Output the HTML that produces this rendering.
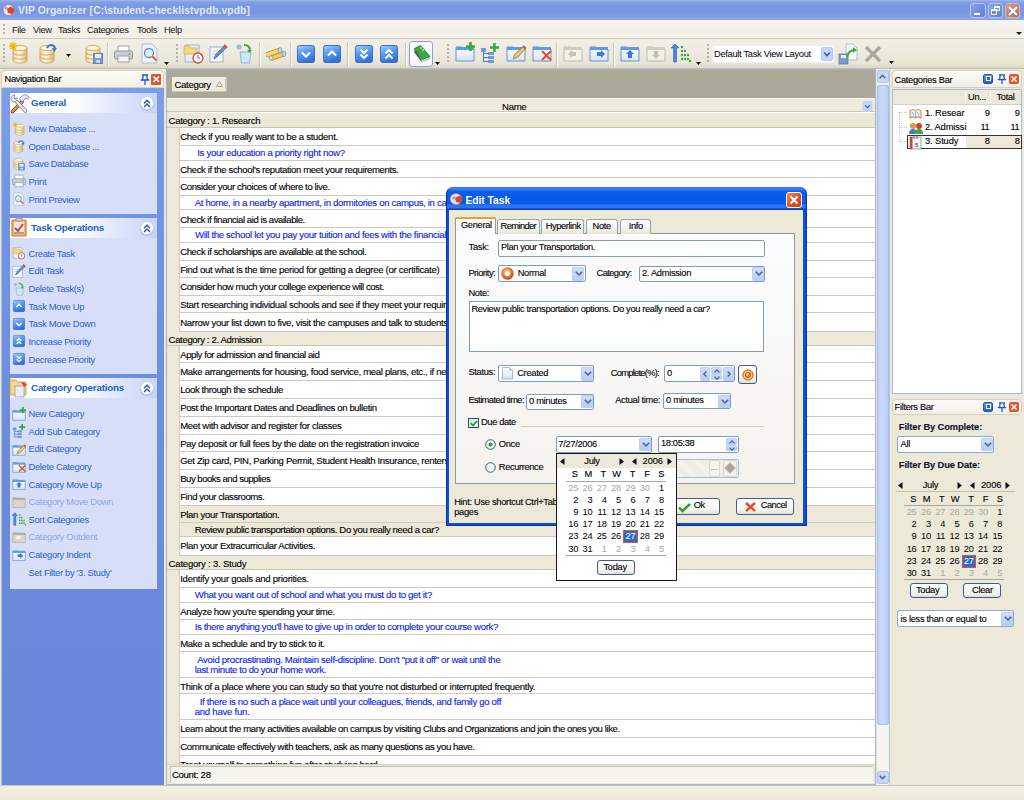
<!DOCTYPE html>
<html><head><meta charset="utf-8">
<style>
*{margin:0;padding:0;box-sizing:border-box}
html,body{width:1024px;height:800px;overflow:hidden;background:#ECE9D8;font-family:"Liberation Sans",sans-serif;font-size:9.6px;color:#000}
.a{position:absolute}
.t{position:absolute;white-space:nowrap;line-height:1}
svg.i{position:absolute;overflow:visible}
#title{left:0;top:0;width:1024px;height:20px;background:linear-gradient(#A6BBEF 0,#8CA7E7 1px,#7C9AE1 4px,#7896DF 13px,#83A0E4 17px,#90ABE8 19px,#7898DE 20px)}
#title .t{left:18px;top:5.8px;font-size:10.3px;font-weight:bold;color:#DDE7FA;letter-spacing:0.1px}
.wbtn{position:absolute;top:2.5px;width:15.5px;height:15.5px;border:1px solid #B4C6F2;border-radius:3px;background:linear-gradient(135deg,#89A4E8,#5C7FD6)}
#menu{left:0;top:20px;width:1024px;height:18px;background:linear-gradient(#F5F3EC,#F1EFE6)}
#menu .t{top:6.2px;font-size:9.3px;color:#111;letter-spacing:-0.35px}
#tb{left:0;top:38px;width:1024px;height:31px;background:linear-gradient(#F2F0E6 0,#EEECE0 40%,#E8E5D6 85%,#DAD7C6 100%);border-top:1px solid #CFCCBC;border-bottom:1px solid #BFBCAC}
.grip{position:absolute;width:2px;background:repeating-linear-gradient(#B5B29E 0 2px,transparent 2px 4px)}
.sep{position:absolute;width:2px;border-left:1px solid #C9C6B5;border-right:1px solid #FFFFFF}
#navhdr{left:1px;top:70px;width:163px;height:18px;background:linear-gradient(#FCFBF7,#F2F0E8);border:1px solid #D3D0C2;border-radius:4px 4px 2px 2px}
#nav{left:1px;top:88px;width:163px;height:697px;background:linear-gradient(#7C9FE7 0,#7295E2 120px,#6A8CDB 400px,#6888DA 100%);border-left:1px solid #A7BAE8}
.grp{position:absolute;left:9px;width:147px;background:#D6DFF7}
.ghd{position:absolute;left:0;top:0;width:147px;height:20px;border-radius:4px 4px 0 0;background:linear-gradient(90deg,#FFFFFF 0,#FFFFFF 40%,#C7D4F7 100%)}
.ghd .t{left:20px;top:5px;font-weight:bold;color:#215DC6;font-size:9.8px;letter-spacing:-0.2px}
.cbtn{position:absolute;left:129.5px;top:2.5px;width:14.5px;height:14.5px;border-radius:50%;background:#fff;border:1px solid #C8D2EC;box-shadow:0 1px 1px #B0BEE0}
.lnk{position:absolute;font-size:9.4px;color:#2A5FC8;letter-spacing:-0.32px;white-space:nowrap;line-height:1}
.dis{color:#8EA5DC}
#gridbox{left:167px;top:70px;width:708px;height:715px;background:#fff;overflow:hidden}
#gridbd{left:166px;top:69px;width:710px;height:716px;border:1px solid #A5B3CC}
.gt{position:absolute;white-space:nowrap;line-height:1;font-size:9.6px;letter-spacing:-0.33px;color:#000;-webkit-text-stroke:0.12px currentColor}
.pv{color:#0A1EF0}
.row{position:absolute;left:12px;width:696px;border-bottom:1px solid #CDC9BC;border-left:1px solid #D0CCBE;background:#fff}
.sel{background:#ECE9D8}
.catrow{position:absolute;left:0;width:708px;background:#ECE9D8;border-bottom:1px solid #C9C5B5}
.phd{position:absolute;left:891.5px;width:130px;border:1px solid #D3D0C2;border-radius:4px 4px 3px 3px;background:linear-gradient(#FCFBF7,#F1EFE6)}
.pic{position:absolute;width:10px;height:10px;border-radius:2px}
.ut{position:absolute;white-space:nowrap;line-height:1;font-size:9.3px;letter-spacing:-0.3px;color:#000;-webkit-text-stroke:0.12px #000}
.cb{position:absolute;background:#fff;border:1px solid #8FA8CF;border-radius:2px}
.cbb{position:absolute;width:12px;background:linear-gradient(#CFDDFD,#B7CBF8);border:1px solid #BCD0FA;border-radius:1px}
.cbb svg{left:2px;top:50%;margin-top:-2.5px}
.calday{position:absolute;white-space:nowrap;line-height:1;font-size:9.3px;color:#000;text-align:right;width:14px;letter-spacing:-0.2px}
.gr{color:#A9A8A0}
.dlg{left:445.5px;top:187px;width:361px;height:339px;border-radius:7px 7px 0 0;background:#0A4FE0}
.tab{position:absolute;height:15px;border:1px solid #91A7B4;border-bottom:none;border-radius:3px 3px 0 0;background:linear-gradient(#FFFFFF,#F3F2EC 60%,#E8E6DC)}
.ed{position:absolute;background:#fff;border:1px solid #7F9DB9}
.btn{position:absolute;border:1px solid #3F5F9A;border-radius:3px;background:linear-gradient(#FFFFFF,#F5F4EF 70%,#E3E0D3)}

</style></head><body>
<svg width="0" height="0" style="position:absolute"><defs>
<linearGradient id="gdb" x1="0" x2="1"><stop offset="0" stop-color="#E9D7A6"/><stop offset=".45" stop-color="#FFF8E4"/><stop offset="1" stop-color="#D9B976"/></linearGradient>
<linearGradient id="gbl" x1="0" y1="0" x2=".4" y2="1"><stop offset="0" stop-color="#A6D0FC"/><stop offset=".45" stop-color="#5CA0F2"/><stop offset="1" stop-color="#3272DA"/></linearGradient>
<linearGradient id="gfo" x1="0" y1="0" x2="0" y2="1"><stop offset="0" stop-color="#FFFFFF"/><stop offset="1" stop-color="#D6E3F6"/></linearGradient>
<symbol id="db" viewBox="0 0 18 20"><path d="M2 4v12c0 1.8 3.1 3 7 3s7-1.2 7-3V4" fill="url(#gdb)" stroke="#C79A4A" stroke-width=".8"/><ellipse cx="9" cy="4" rx="7" ry="2.6" fill="#FFF6DA" stroke="#C79A4A" stroke-width=".8"/><path d="M2 8.5c0 1.6 3.1 2.6 7 2.6s7-1 7-2.6M2 12.5c0 1.6 3.1 2.6 7 2.6s7-1 7-2.6" fill="none" stroke="#D9A658" stroke-width="1"/></symbol>
<symbol id="dbnew" viewBox="0 0 20 22"><use href="#db" x="2" y="2" width="18" height="20"/><path d="M4 0v8M0 4h8M1 1l6 6M7 1L1 7" stroke="#F4B400" stroke-width="1.3"/></symbol>
<symbol id="dbopen" viewBox="0 0 20 22"><use href="#db" x="0" y="2" width="18" height="20"/><path d="M9 6c2-4 7-4 8 0" fill="none" stroke="#3D7BD8" stroke-width="2.2"/><path d="M14 6h5l-2.5 4z" fill="#3D7BD8"/></symbol>
<symbol id="dbsave" viewBox="0 0 20 22"><use href="#db" x="0" y="1" width="18" height="20"/><rect x="9.5" y="10.5" width="9" height="10" fill="#7A9DD6" stroke="#4E6EA8" stroke-width=".8"/><rect x="11" y="11" width="6" height="4" fill="#E8EEF8"/><rect x="12" y="17" width="4" height="3" fill="#C8D4E8"/></symbol>
<symbol id="printer" viewBox="0 0 19 18"><rect x="4" y="1" width="11" height="6" fill="#fff" stroke="#8A8F9A" stroke-width=".8"/><rect x=".5" y="6" width="18" height="8" rx="1.5" fill="#C9CDD6" stroke="#7D838E" stroke-width=".8"/><rect x="4" y="11" width="11" height="6" fill="#F4F4F4" stroke="#8A8F9A" stroke-width=".8"/><circle cx="15.5" cy="8.8" r=".9" fill="#3BB33B"/></symbol>
<symbol id="preview" viewBox="0 0 18 21"><path d="M1 1h10l5 5v14H1z" fill="#EEF3FB" stroke="#9BAFCF" stroke-width=".8"/><circle cx="8" cy="10" r="4.5" fill="#DDEBFA" stroke="#6E8FB8" stroke-width="1.3"/><path d="M11 13l4.5 4.5" stroke="#D0702A" stroke-width="2.2"/></symbol>
<symbol id="ctask" viewBox="0 0 22 21"><path d="M2 2h14v17H2z" fill="#E7EEF9" stroke="#8CA2C6" stroke-width=".8"/><path d="M1 3h5l2 2h6v6H1z" fill="#F5D880" stroke="#D4A848" stroke-width=".7"/><circle cx="15" cy="15" r="5" fill="#F7F7F7" stroke="#D04848" stroke-width="1.3"/><path d="M15 12v3h2" stroke="#666" stroke-width=".9" fill="none"/></symbol>
<symbol id="etask" viewBox="0 0 19 19"><rect x="1" y="3" width="13" height="15" fill="#F4F7FD" stroke="#8AA0C4" stroke-width=".8"/><path d="M3 7h8M3 10h8M3 13h6" stroke="#B8C6DE" stroke-width=".8"/><path d="M5 15l2-5 9-9 2 2-9 9z" fill="#6C8FC8" stroke="#44607F" stroke-width=".7"/><path d="M15 1l3 3" stroke="#D84A3A" stroke-width="2"/></symbol>
<symbol id="dtask" viewBox="0 0 19 21"><path d="M5 9h11l-1.5 11h-8z" fill="#CFE6F8" stroke="#79A7D2" stroke-width=".8"/><circle cx="4" cy="4" r="2.5" fill="#9FB8E0"/><path d="M9 2c4 0 6 2 6 6" fill="none" stroke="#3DAA3D" stroke-width="2"/><path d="M12 7h5l-2.5 3z" fill="#3DAA3D"/></symbol>
<symbol id="binoc" viewBox="0 0 21 14"><path d="M2 7.5L13 3.5" stroke="#B98E2E" stroke-width="5.5" stroke-linecap="round"/><path d="M2 7.5L13 3.5" stroke="#F6D878" stroke-width="3.8" stroke-linecap="round"/><path d="M6 11L17 7" stroke="#B98E2E" stroke-width="5.5" stroke-linecap="round"/><path d="M6 11L17 7" stroke="#F2C860" stroke-width="3.8" stroke-linecap="round"/><ellipse cx="14" cy="3.3" rx="1.8" ry="2.8" fill="#C9D6E6" stroke="#6F86A8" stroke-width=".7"/><ellipse cx="18" cy="6.8" rx="1.8" ry="2.8" fill="#C9D6E6" stroke="#6F86A8" stroke-width=".7"/><circle cx="5" cy="11" r="2" fill="#D8E0EA" stroke="#8796AE" stroke-width=".6"/></symbol>
<symbol id="sqdn" viewBox="0 0 18 18"><rect x=".5" y=".5" width="17" height="17" rx="2" fill="url(#gbl)" stroke="#2458B8" stroke-width=".8"/><path d="M5 7.5L9 11.5l4-4" fill="none" stroke="#fff" stroke-width="2.2"/></symbol>
<symbol id="squp" viewBox="0 0 18 18"><rect x=".5" y=".5" width="17" height="17" rx="2" fill="url(#gbl)" stroke="#2458B8" stroke-width=".8"/><path d="M5 10.5L9 6.5l4 4" fill="none" stroke="#fff" stroke-width="2.2"/></symbol>
<symbol id="sqdd" viewBox="0 0 18 18"><rect x=".5" y=".5" width="17" height="17" rx="2" fill="url(#gbl)" stroke="#2458B8" stroke-width=".8"/><path d="M5.5 4.5L9 8l3.5-3.5M5.5 9.5L9 13l3.5-3.5" fill="none" stroke="#fff" stroke-width="2"/></symbol>
<symbol id="squu" viewBox="0 0 18 18"><rect x=".5" y=".5" width="17" height="17" rx="2" fill="url(#gbl)" stroke="#2458B8" stroke-width=".8"/><path d="M5.5 8.5L9 5l3.5 3.5M5.5 13.5L9 10l3.5 3.5" fill="none" stroke="#fff" stroke-width="2"/></symbol>
<symbol id="fold" viewBox="0 0 20 18"><path d="M1 3h6l2 2h10v12H1z" fill="url(#gfo)" stroke="#5C88C8" stroke-width=".9"/><rect x="1" y="3" width="18" height="3" fill="#5E9BE8"/></symbol>
<symbol id="foldg" viewBox="0 0 20 18"><path d="M1 3h6l2 2h10v12H1z" fill="#F2F1EC" stroke="#B9B6AA" stroke-width=".9"/><rect x="1" y="3" width="18" height="3" fill="#CFCCC0"/></symbol><symbol id="foldd" viewBox="0 0 20 18"><path d="M1 3h6l2 2h10v12H1z" fill="#D9D6C8" stroke="#A9A594" stroke-width=".9"/><rect x="1" y="3" width="18" height="3" fill="#B3AF9E"/></symbol><symbol id="foldo" viewBox="0 0 20 18"><use href="#foldd" width="20" height="18"/><path d="M5 10l4-4v2h4v4H9v2z" fill="#F4F2EA"/></symbol>
<symbol id="fnew" viewBox="0 0 20 20"><use href="#fold" y="2" width="20" height="18"/><path d="M15.5 0v9M11 4.5h9" stroke="#39A83A" stroke-width="2.6"/></symbol>
<symbol id="fsub" viewBox="0 0 20 20"><rect x="1" y="5" width="5" height="4" fill="#6E9BDA"/><rect x="8" y="9" width="6" height="3" fill="#6E9BDA"/><rect x="8" y="13" width="6" height="3" fill="#6E9BDA"/><rect x="8" y="17" width="6" height="3" fill="#6E9BDA"/><path d="M3.5 9v10M3.5 10.5h5M3.5 14.5h5M3.5 18.5h5" stroke="#4A7AC0" stroke-width="1"/><path d="M14.5 0v9M10 4.5h9" stroke="#39A83A" stroke-width="2.4"/></symbol>
<symbol id="fedit" viewBox="0 0 20 20"><use href="#fold" y="2" width="20" height="18"/><path d="M7 17l2-5 9-8 2 2-8 9z" fill="#F1C36B" stroke="#7F6A3A" stroke-width=".7"/><path d="M17 4l3 3" stroke="#D84A3A" stroke-width="2"/></symbol>
<symbol id="fdel" viewBox="0 0 20 20"><use href="#fold" y="2" width="20" height="18"/><path d="M10 9l9 9M19 9l-9 9" stroke="#E0502A" stroke-width="2"/></symbol>
<symbol id="fleft" viewBox="0 0 20 18"><use href="#foldg" width="20" height="18"/><path d="M5 10l4-4v2h4v4H9v2z" fill="#C5C2B6"/></symbol>
<symbol id="fright" viewBox="0 0 20 18"><use href="#fold" width="20" height="18"/><path d="M16 10l-4-4v2H8v4h4v2z" fill="#3C78D8"/></symbol>
<symbol id="fup" viewBox="0 0 20 18"><use href="#fold" width="20" height="18"/><path d="M10 6l4 4h-2v4H8v-4H6z" fill="#3C78D8"/></symbol>
<symbol id="fdn" viewBox="0 0 20 18"><use href="#foldg" width="20" height="18"/><path d="M10 15l4-4h-2V7H8v4H6z" fill="#C5C2B6"/></symbol>
<symbol id="sort" viewBox="0 0 20 20"><path d="M4 1l4 4H5.5v14h-3V5H0z" fill="#4A86E0" stroke="#2C5FB0" stroke-width=".6"/><g fill="#3FA83F"><circle cx="11" cy="4" r="1.2"/><circle cx="11" cy="8" r="1.2"/><circle cx="14" cy="8" r="1.2"/><circle cx="11" cy="12" r="1.2"/><circle cx="14" cy="12" r="1.2"/><circle cx="17" cy="12" r="1.2"/><circle cx="11" cy="16" r="1.2"/><circle cx="14" cy="16" r="1.2"/><circle cx="17" cy="16" r="1.2"/><circle cx="19" cy="18" r="1.2"/></g></symbol>
<symbol id="cmbb" viewBox="0 0 12 14"><rect x=".5" y=".5" width="11" height="13" rx="1.5" fill="#C3D3FD" stroke="#B6C8F5"/><path d="M3 5.5l3 3 3-3" fill="none" stroke="#4D6185" stroke-width="1.6"/></symbol>
<symbol id="arr" viewBox="0 0 5 3"><path d="M0 0h5L2.5 3z" fill="#111"/></symbol>
</defs></svg>
<div id="title" class="a"><div class="t">VIP Organizer [C:\student-checklistvpdb.vpdb]</div>
<svg class="i" style="left:2px;top:3px" width="14" height="14" viewBox="0 0 14 14"><circle cx="6.5" cy="7" r="5.5" fill="#ECE6EA" stroke="#C27070" stroke-width="0.8"/><path d="M5 6l4-2.5 3.5 3-2 4.5-4.5-1z" fill="#D8462A"/><circle cx="4" cy="5" r="1.5" fill="#8FA6D8"/></svg>
<div class="wbtn" style="left:970px"><div class="a" style="left:3px;top:9px;width:6px;height:2px;background:#fff"></div></div>
<div class="wbtn" style="left:987.5px"><div class="a" style="left:5px;top:2px;width:6px;height:5px;border:1px solid #fff;border-top-width:2px"></div><div class="a" style="left:2px;top:5px;width:6px;height:6px;border:1px solid #fff;border-top-width:2px;background:#6E8CDC"></div></div>
<div class="wbtn" style="left:1004.5px;background:linear-gradient(135deg,#D69A90,#B86A5E);border-color:#D8B8B4"><svg class="i" style="left:2px;top:2px" width="10" height="10"><path d="M1 1L9 9M9 1L1 9" stroke="#fff" stroke-width="2"/></svg></div>
</div>
<div id="menu" class="a">
<div class="grip" style="left:3px;top:4px;height:12px"></div>
<div class="t" style="left:12px">File</div>
<div class="t" style="left:33px">View</div>
<div class="t" style="left:58px">Tasks</div>
<div class="t" style="left:87px">Categories</div>
<div class="t" style="left:137px">Tools</div>
<div class="t" style="left:164px">Help</div>
<svg class="i" style="left:1016px;top:12px" width="6" height="4"><path d="M0 0h6L3 3z" fill="#222"/></svg>
</div>
<div id="tb" class="a">
<div class="grip" style="left:3px;top:5px;height:20px"></div>
<svg class="i" style="left:9px;top:3px" width="20" height="22"><use href="#dbnew"/></svg>
<svg class="i" style="left:38px;top:3px" width="20" height="22"><use href="#dbopen"/></svg>
<svg class="i" style="left:66px;top:15px" width="5" height="3"><use href="#arr"/></svg>
<svg class="i" style="left:84px;top:4px" width="20" height="22"><use href="#dbsave"/></svg>
<div class="sep" style="left:107px;top:3px;height:24px"></div>
<svg class="i" style="left:114px;top:6px" width="19" height="18"><use href="#printer"/></svg>
<svg class="i" style="left:141px;top:4px" width="18" height="21"><use href="#preview"/></svg>
<svg class="i" style="left:164px;top:22.5px" width="5" height="3"><use href="#arr"/></svg>
<div class="grip" style="left:176px;top:5px;height:20px"></div>
<svg class="i" style="left:183px;top:4px" width="22" height="21"><use href="#ctask"/></svg>
<svg class="i" style="left:209px;top:5px" width="19" height="19"><use href="#etask"/></svg>
<svg class="i" style="left:235px;top:4px" width="19" height="21"><use href="#dtask"/></svg>
<div class="sep" style="left:259px;top:3px;height:24px"></div>
<svg class="i" style="left:266px;top:8px" width="21" height="14"><use href="#binoc"/></svg>
<div class="sep" style="left:290px;top:3px;height:24px"></div>
<svg class="i" style="left:297px;top:6px" width="18" height="18"><use href="#sqdn"/></svg>
<svg class="i" style="left:323px;top:6px" width="18" height="18"><use href="#squp"/></svg>
<div class="sep" style="left:347px;top:3px;height:24px"></div>
<svg class="i" style="left:355px;top:6px" width="18" height="18"><use href="#sqdd"/></svg>
<svg class="i" style="left:380px;top:6px" width="18" height="18"><use href="#squu"/></svg>
<div class="sep" style="left:405px;top:3px;height:24px"></div>
<div class="a" style="left:409px;top:2px;width:24px;height:26px;border:1px solid #8DA4C8;border-radius:3px;background:linear-gradient(#FFFFFF,#F3F5F9)"></div>
<svg class="i" style="left:412px;top:5px" width="19" height="19" viewBox="0 0 19 19"><path d="M2.5 8L9.5 17.5 17.5 15 10.5 6z" fill="#E6ECF2" stroke="#8898A8" stroke-width=".7"/><path d="M4 10l6 7M5.5 9.5l5.5 6.5" stroke="#B8C4D0" stroke-width=".6"/><path d="M2.5 4.5L8.5 1.5 18 12.5 10.5 15.5z" fill="#34AC3E" stroke="#1A7A28" stroke-width=".8"/><path d="M2.5 4.5V8.5L9.5 17.5V15.5z" fill="#4A5A4A"/><circle cx="9" cy="4" r=".8" fill="#fff"/><circle cx="11" cy="6" r=".8" fill="#fff"/></svg>
<svg class="i" style="left:435px;top:22.5px" width="5" height="3"><use href="#arr"/></svg>
<div class="grip" style="left:447px;top:5px;height:20px"></div>
<svg class="i" style="left:455px;top:3px" width="20" height="20"><use href="#fnew"/></svg>
<svg class="i" style="left:480px;top:4px" width="20" height="20"><use href="#fsub"/></svg>
<svg class="i" style="left:506px;top:3px" width="20" height="20"><use href="#fedit"/></svg>
<svg class="i" style="left:532px;top:3px" width="20" height="20"><use href="#fdel"/></svg>
<div class="sep" style="left:556px;top:3px;height:24px"></div>
<svg class="i" style="left:563px;top:5px" width="20" height="18"><use href="#fleft"/></svg>
<svg class="i" style="left:589px;top:5px" width="20" height="18"><use href="#fright"/></svg>
<div class="sep" style="left:613px;top:3px;height:24px"></div>
<svg class="i" style="left:620px;top:5px" width="20" height="18"><use href="#fup"/></svg>
<svg class="i" style="left:646px;top:5px" width="20" height="18"><use href="#fdn"/></svg>
<svg class="i" style="left:671px;top:4px" width="20" height="20"><use href="#sort"/></svg>
<svg class="i" style="left:696px;top:22.5px" width="5" height="3"><use href="#arr"/></svg>
<div class="grip" style="left:707px;top:5px;height:20px"></div>
<div class="a" style="left:712px;top:6px;width:122px;height:18px;background:#fff;border:1px solid #F0F0F0"></div>
<div class="t" style="left:714px;top:10.5px;letter-spacing:-0.3px;font-size:9.3px">Default Task View Layout</div>
<svg class="i" style="left:821px;top:8px" width="12" height="14"><use href="#cmbb"/></svg>
<svg class="i" style="left:838px;top:4px" width="20" height="22" viewBox="0 0 20 22"><path d="M8 1h7l4 4v12H8z" fill="#F4F7FC" stroke="#9FB1CC" stroke-width=".8"/><rect x="1" y="11" width="9" height="10" fill="#7C9CD2" stroke="#4F6EA8" stroke-width=".7"/><rect x="3" y="12" width="5" height="3" fill="#E8EEF8"/><path d="M9 14c1-5 4-7 8-7" fill="none" stroke="#3DAA3D" stroke-width="2.2"/><path d="M15 4l4 3-4 3z" fill="#3DAA3D"/></svg>
<svg class="i" style="left:864px;top:6px" width="18" height="18" viewBox="0 0 18 18"><path d="M2 2l14 14M16 2L2 16" stroke="#A9A9A4" stroke-width="3.2"/></svg>
<svg class="i" style="left:889px;top:22px" width="5" height="3"><use href="#arr"/></svg>
</div>
<div id="navhdr" class="a"><div class="ut" style="left:2.5px;top:4.3px">Navigation Bar</div>
<svg class="i" style="left:138px;top:3px" width="10" height="11" viewBox="0 0 10 11"><path d="M2 1h6M3.2 1L2.6 5.6M6.8 1l.6 4.6M.8 6h8.4M5 6v5" stroke="#2158C0" stroke-width="1.3" fill="none"/></svg>
<div class="a" style="left:148.5px;top:3px;width:10.5px;height:10.5px;background:#E0552F;border-radius:1px"><svg class="i" style="left:2px;top:2px" width="6.5" height="6.5"><path d="M.5 .5l5.5 5.5M6 .5L.5 6" stroke="#fff" stroke-width="1.7"/></svg></div>
</div>
<div id="nav" class="a"></div>
<!-- General group -->
<div class="grp" style="left:10px;top:93px;height:121px">
 <div class="ghd"><div class="t" style="left:21px;top:4.6px">General</div>
  <svg class="i" style="left:-0.5px;top:0.5px" width="20" height="20" viewBox="0 0 20 20"><path d="M2.5 17.5L12 8" stroke="#6A3A10" stroke-width="3.6" stroke-linecap="round"/><path d="M2.5 17.5L12 8" stroke="#F2A23A" stroke-width="2.2" stroke-linecap="round"/><path d="M3.5 17l1-1M6 14.5l1-1M8.5 12l1-1" stroke="#C8501A" stroke-width="1"/><path d="M4.5 5.5L15.5 17" stroke="#6F7F98" stroke-width="3.6" stroke-linecap="round"/><path d="M4.5 5.5L15.5 17" stroke="#F4F6FA" stroke-width="2" stroke-linecap="round"/><path d="M1 4.5C1 2 3 .8 5 1.2L3.8 3.5 5 5 7.2 4C7.6 6.2 6 8 3.6 7.8 2 7.6 1 6 1 4.5z" fill="#EEF1F6" stroke="#6F7F98" stroke-width=".8"/><path d="M9.5 4.5L13.5 .8C15.5 .5 18 1.5 19.2 3.5L17.5 5 15.8 4 12 8z" fill="#E6EAF0" stroke="#6F7F98" stroke-width=".8"/></svg>
  <div class="cbtn"><svg class="i" style="left:2.7px;top:2.2px" width="8" height="9" viewBox="0 0 8 9"><path d="M1 4.2L4 1.2l3 3M1 8L4 5l3 3" fill="none" stroke="#2150B8" stroke-width="1.4"/></svg></div>
 </div>
</div>
<div class="grp" style="left:10px;top:218px;height:156px">
 <div class="ghd"><div class="t" style="left:21px;top:4.6px">Task Operations</div>
  <svg class="i" style="left:1px;top:-1px" width="16" height="20" viewBox="0 0 16 20"><rect x="1" y="3" width="14" height="16" rx="1" fill="#F7B860" stroke="#DC6E1E" stroke-width="1.1"/><rect x="3" y="5" width="10" height="12" fill="#E6EAF0"/><rect x="3" y="15" width="10" height="2" fill="#9AA2B0"/><rect x="5" y="1.5" width="6" height="2.5" fill="#C8CCD4" stroke="#D07020" stroke-width=".6"/><path d="M4 11l3 3 5-7" fill="none" stroke="#D43A2A" stroke-width="1.8"/></svg>
  <div class="cbtn"><svg class="i" style="left:2.7px;top:2.2px" width="8" height="9" viewBox="0 0 8 9"><path d="M1 4.2L4 1.2l3 3M1 8L4 5l3 3" fill="none" stroke="#2150B8" stroke-width="1.4"/></svg></div>
 </div>
</div>
<div class="grp" style="left:10px;top:378px;height:211px">
 <div class="ghd"><div class="t" style="left:21px;top:4.6px">Category Operations</div>
  <svg class="i" style="left:-1px;top:-2px" width="20" height="22" viewBox="0 0 20 22"><path d="M1 4h6l2 2h8v13H1z" fill="#F6D68A" stroke="#C99A40" stroke-width=".8"/><rect x="6" y="10" width="9" height="11" fill="#E8EEF6" stroke="#8796AE" stroke-width=".7"/><path d="M12 6c2 0 5 1 6 3l-3 2z" fill="#E2452A"/></svg>
  <div class="cbtn"><svg class="i" style="left:2.7px;top:2.2px" width="8" height="9" viewBox="0 0 8 9"><path d="M1 4.2L4 1.2l3 3M1 8L4 5l3 3" fill="none" stroke="#2150B8" stroke-width="1.4"/></svg></div>
 </div>
</div>
<div class="lnk" style="left:28.5px;top:123.90px">New Database ...</div>
<svg class="i" style="left:12px;top:121.50px" width="14" height="14"><use href="#dbnew"/></svg>
<div class="lnk" style="left:28.5px;top:141.55px">Open Database ...</div>
<svg class="i" style="left:12px;top:139.15px" width="14" height="14"><use href="#dbopen"/></svg>
<div class="lnk" style="left:28.5px;top:159.20px">Save Database</div>
<svg class="i" style="left:12px;top:156.80px" width="14" height="14"><use href="#dbsave"/></svg>
<div class="lnk" style="left:28.5px;top:176.85px">Print</div>
<svg class="i" style="left:12px;top:174.45px" width="14" height="14"><use href="#printer"/></svg>
<div class="lnk" style="left:28.5px;top:194.50px">Print Preview</div>
<svg class="i" style="left:12px;top:192.10px" width="14" height="14"><use href="#preview"/></svg>
<div class="lnk" style="left:28.5px;top:248.70px">Create Task</div>
<svg class="i" style="left:12px;top:246.30px" width="14" height="14"><use href="#ctask"/></svg>
<div class="lnk" style="left:28.5px;top:266.35px">Edit Task</div>
<svg class="i" style="left:12px;top:263.95px" width="14" height="14"><use href="#etask"/></svg>
<div class="lnk" style="left:28.5px;top:284.00px">Delete Task(s)</div>
<svg class="i" style="left:12px;top:281.60px" width="14" height="14"><use href="#dtask"/></svg>
<div class="lnk" style="left:28.5px;top:301.65px">Task Move Up</div>
<svg class="i" style="left:13px;top:299.95px" width="12" height="12"><use href="#squp"/></svg>
<div class="lnk" style="left:28.5px;top:319.30px">Task Move Down</div>
<svg class="i" style="left:13px;top:317.60px" width="12" height="12"><use href="#sqdn"/></svg>
<div class="lnk" style="left:28.5px;top:336.95px">Increase Priority</div>
<svg class="i" style="left:13px;top:335.25px" width="12" height="12"><use href="#squu"/></svg>
<div class="lnk" style="left:28.5px;top:354.60px">Decrease Priority</div>
<svg class="i" style="left:13px;top:352.90px" width="12" height="12"><use href="#sqdd"/></svg>
<div class="lnk" style="left:28.5px;top:408.90px">New Category</div>
<svg class="i" style="left:12px;top:406.50px" width="14" height="14"><use href="#fnew"/></svg>
<div class="lnk" style="left:28.5px;top:426.55px">Add Sub Category</div>
<svg class="i" style="left:12px;top:424.15px" width="14" height="14"><use href="#fsub"/></svg>
<div class="lnk" style="left:28.5px;top:444.20px">Edit Category</div>
<svg class="i" style="left:12px;top:441.80px" width="14" height="14"><use href="#fedit"/></svg>
<div class="lnk" style="left:28.5px;top:461.85px">Delete Category</div>
<svg class="i" style="left:12px;top:459.45px" width="14" height="14"><use href="#fdel"/></svg>
<div class="lnk" style="left:28.5px;top:479.50px">Category Move Up</div>
<svg class="i" style="left:12px;top:477.10px" width="14" height="14"><use href="#fup"/></svg>
<div class="lnk dis" style="left:28.5px;top:497.15px">Category Move Down</div>
<svg class="i" style="left:12px;top:494.75px" width="14" height="14"><use href="#foldd"/></svg>
<div class="lnk" style="left:28.5px;top:514.80px">Sort Categories</div>
<svg class="i" style="left:12px;top:512.40px" width="14" height="14"><use href="#sort"/></svg>
<div class="lnk dis" style="left:28.5px;top:532.45px">Category Outdent</div>
<svg class="i" style="left:12px;top:530.05px" width="14" height="14"><use href="#foldo"/></svg>
<div class="lnk" style="left:28.5px;top:550.10px">Category Indent</div>
<svg class="i" style="left:12px;top:547.70px" width="14" height="14"><use href="#fright"/></svg>
<div class="lnk" style="left:28.5px;top:567.75px">Set Filter by '3. Study'</div><div id="gridbox" class="a">
<div class="a" style="left:0;top:0;width:708px;height:28px;background:#ACA899"></div>
<div class="a" style="left:5px;top:6.7px;width:55px;height:15.2px;background:linear-gradient(#F1EFE4,#ECE9DA);border-right:1px solid #C9C6B6;border-bottom:1px solid #C9C6B6"></div>
<div class="gt" style="left:7.5px;top:9.97px">Category</div>
<svg class="i" style="left:49px;top:11px" width="7" height="6" viewBox="0 0 7 6"><path d="M3.5 .5L6.5 5.5H.5z" fill="none" stroke="#A6A394" stroke-width="1"/></svg>
<div class="a" style="left:58px;top:9px;width:1px;height:10px;background:#C9C6B6"></div>
<div class="a" style="left:0;top:28px;width:708px;height:14.4px;background:#EEEBDF;border-top:1px solid #F8F7F0;border-bottom:1px solid #CBC7B8"></div>
<div class="gt" style="left:335.10px;top:32.07px">Name</div>
<svg class="i" style="left:695px;top:31px" width="11" height="11"><use href="#cmbb" width="11" height="11"/></svg>
<div class="a" style="left:0;top:42px;width:12.5px;height:680px;background:#ECE9D8"></div>
<div class="catrow" style="top:42.90px;height:15.10px"></div>
<div class="gt" style="left:1.60px;top:46.00px;letter-spacing:-0.319px">Category : 1. Research</div>
<div class="row" style="top:58.00px;height:17.70px"></div>
<div class="gt" style="left:13.20px;top:62.00px;letter-spacing:-0.303px">Check if you really want to be a student.</div>
<div class="row" style="top:75.70px;height:15.20px"></div>
<div class="gt pv" style="left:30.20px;top:78.20px;letter-spacing:-0.306px">Is your education a priority right now?</div>
<div class="row" style="top:90.90px;height:17.10px"></div>
<div class="gt" style="left:13.20px;top:94.90px;letter-spacing:-0.383px">Check if the school's reputation meet your requirements.</div>
<div class="row" style="top:108.00px;height:17.70px"></div>
<div class="gt" style="left:13.20px;top:112.00px;letter-spacing:-0.391px">Consider your choices of where to live.</div>
<div class="row" style="top:125.70px;height:14.80px"></div>
<div class="gt pv" style="left:27.70px;top:128.20px">At home, in a nearby apartment, in dormitories on campus, in campus housing</div>
<div class="row" style="top:140.50px;height:17.25px"></div>
<div class="gt" style="left:13.20px;top:144.50px;letter-spacing:-0.449px">Check if financial aid is available.</div>
<div class="row" style="top:157.75px;height:15.25px"></div>
<div class="gt pv" style="left:27.95px;top:160.25px">Will the school let you pay your tuition and fees with the financial aid</div>
<div class="row" style="top:173.00px;height:17.90px"></div>
<div class="gt" style="left:13.20px;top:177.00px;letter-spacing:-0.427px">Check if scholarships are available at the school.</div>
<div class="row" style="top:190.90px;height:17.20px"></div>
<div class="gt" style="left:13.20px;top:194.90px;letter-spacing:-0.304px">Find out what is the time period for getting a degree (or certificate)</div>
<div class="row" style="top:208.10px;height:17.80px"></div>
<div class="gt" style="left:13.20px;top:212.10px;letter-spacing:-0.462px">Consider how much your college experience will cost.</div>
<div class="row" style="top:225.90px;height:17.60px"></div>
<div class="gt" style="left:13.20px;top:229.90px">Start researching individual schools and see if they meet your requirements.</div>
<div class="row" style="top:243.50px;height:18.00px"></div>
<div class="gt" style="left:13.20px;top:247.50px">Narrow your list down to five, visit the campuses and talk to students there.</div>
<div class="catrow" style="top:261.50px;height:14.40px"></div>
<div class="gt" style="left:1.60px;top:264.60px;letter-spacing:-0.369px">Category : 2. Admission</div>
<div class="row" style="top:275.90px;height:17.50px"></div>
<div class="gt" style="left:13.20px;top:279.90px;letter-spacing:-0.446px">Apply for admission and financial aid</div>
<div class="row" style="top:293.40px;height:17.85px"></div>
<div class="gt" style="left:13.20px;top:297.40px">Make arrangements for housing, food service, meal plans, etc., if needed</div>
<div class="row" style="top:311.25px;height:17.75px"></div>
<div class="gt" style="left:13.20px;top:315.25px;letter-spacing:-0.418px">Look through the schedule</div>
<div class="row" style="top:329.00px;height:17.50px"></div>
<div class="gt" style="left:13.20px;top:333.00px;letter-spacing:-0.403px">Post the Important Dates and Deadlines on bulletin</div>
<div class="row" style="top:346.50px;height:18.00px"></div>
<div class="gt" style="left:13.20px;top:350.50px;letter-spacing:-0.364px">Meet with advisor and register for classes</div>
<div class="row" style="top:364.50px;height:17.60px"></div>
<div class="gt" style="left:13.20px;top:368.50px;letter-spacing:-0.319px">Pay deposit or full fees by the date on the registration invoice</div>
<div class="row" style="top:382.10px;height:17.60px"></div>
<div class="gt" style="left:13.20px;top:386.10px">Get Zip card, PIN, Parking Permit, Student Health Insurance, renters insurance</div>
<div class="row" style="top:399.70px;height:18.00px"></div>
<div class="gt" style="left:13.20px;top:403.70px;letter-spacing:-0.513px">Buy books and supplies</div>
<div class="row" style="top:417.70px;height:18.00px"></div>
<div class="gt" style="left:13.20px;top:421.70px;letter-spacing:-0.461px">Find your classrooms.</div>
<div class="row sel" style="top:435.70px;height:17.20px"></div>
<div class="gt" style="left:13.20px;top:439.70px;letter-spacing:-0.322px">Plan your Transportation.</div>
<div class="row sel" style="top:452.90px;height:14.40px"></div>
<div class="gt" style="left:27.70px;top:455.40px;letter-spacing:-0.389px">Review public transportation options. Do you really need a car?</div>
<div class="row" style="top:467.30px;height:18.40px"></div>
<div class="gt" style="left:13.20px;top:471.30px;letter-spacing:-0.348px">Plan your Extracurricular Activities.</div>
<div class="catrow" style="top:485.70px;height:14.50px"></div>
<div class="gt" style="left:1.60px;top:488.80px;letter-spacing:-0.235px">Category : 3. Study</div>
<div class="row" style="top:500.20px;height:17.50px"></div>
<div class="gt" style="left:13.20px;top:504.20px;letter-spacing:-0.277px">Identify your goals and priorities.</div>
<div class="row" style="top:517.70px;height:15.00px"></div>
<div class="gt pv" style="left:27.70px;top:520.20px;letter-spacing:-0.327px">What you want out of school and what you must do to get it?</div>
<div class="row" style="top:532.70px;height:17.00px"></div>
<div class="gt" style="left:13.20px;top:536.70px;letter-spacing:-0.389px">Analyze how you're spending your time.</div>
<div class="row" style="top:549.70px;height:15.60px"></div>
<div class="gt pv" style="left:27.70px;top:552.20px;letter-spacing:-0.357px">Is there anything you'll have to give up in order to complete your course work?</div>
<div class="row" style="top:565.30px;height:16.80px"></div>
<div class="gt" style="left:13.20px;top:569.30px;letter-spacing:-0.342px">Make a schedule and try to stick to it.</div>
<div class="row" style="top:582.10px;height:25.60px"></div>
<div class="gt pv" style="left:30.20px;top:584.60px;letter-spacing:-0.307px">Avoid procrastinating. Maintain self-discipline. Don't "put it off" or wait until the</div>
<div class="gt pv" style="left:27.70px;top:594.90px;letter-spacing:-0.383px">last minute to do your home work.</div>
<div class="row" style="top:607.70px;height:16.80px"></div>
<div class="gt" style="left:13.20px;top:611.70px;letter-spacing:-0.304px">Think of a place where you can study so that you're not disturbed or interrupted frequently.</div>
<div class="row" style="top:624.50px;height:25.00px"></div>
<div class="gt pv" style="left:32.70px;top:627.00px;letter-spacing:-0.336px">If there is no such a place wait until your colleagues, friends, and family go off</div>
<div class="gt pv" style="left:27.70px;top:637.30px;letter-spacing:-0.252px">and have fun.</div>
<div class="row" style="top:649.50px;height:18.50px"></div>
<div class="gt" style="left:13.20px;top:653.50px;letter-spacing:-0.431px">Learn about the many activities available on campus by visiting Clubs and Organizations and join the ones you like.</div>
<div class="row" style="top:668.00px;height:18.00px"></div>
<div class="gt" style="left:13.20px;top:672.00px;letter-spacing:-0.399px">Communicate effectively with teachers, ask as many questions as you have.</div>
<div class="row" style="top:686.00px;height:8.50px"></div>
<div class="gt" style="left:13.20px;top:690.00px">Treat yourself to something fun after studying hard.</div>
<div class="a" style="left:0;top:693.5px;width:708px;height:21px;background:#ECE9D8;border-top:1px solid #D6D2C4"></div>
<div class="a" style="left:2.5px;top:695.5px;width:703px;height:17px;background:#F4F3EC;border-top:1px solid #C4C0B0;border-left:1px solid #C4C0B0;border-bottom:1px solid #fff"></div>
<div class="gt" style="left:5.00px;top:699.87px">Count: 28</div>
</div><div id="gridbd" class="a"></div>
<div class="a" style="left:876px;top:69px;width:13px;height:716px;background:#F5F4EE;border-left:1px solid #E8E6DA"></div>
<div class="a" style="left:876.5px;top:70px;width:12px;height:12.5px;background:#C6D6FC;border:1px solid #B2C4EE;border-radius:2px"></div>
<svg class="i" style="left:879px;top:73.5px" width="7" height="5" viewBox="0 0 7 5"><path d="M.7 4.2L3.5 1.3l2.8 2.9" fill="none" stroke="#4D6185" stroke-width="1.4"/></svg>
<div class="a" style="left:876.5px;top:84.5px;width:12px;height:640px;background:linear-gradient(90deg,#C0D2FA,#CADAFD 50%,#B9CCF6);border:1px solid #A9BEEA;border-radius:2px"></div>
<div class="a" style="left:876.5px;top:771px;width:12px;height:12.5px;background:#C6D6FC;border:1px solid #B2C4EE;border-radius:2px"></div>
<svg class="i" style="left:879px;top:775px" width="7" height="5" viewBox="0 0 7 5"><path d="M.7 .8L3.5 3.7l2.8-2.9" fill="none" stroke="#4D6185" stroke-width="1.4"/></svg><div class="a" style="left:889px;top:69px;width:135px;height:716px;background:#ECE9D8;border-left:1px solid #B9C6DC"></div>
<div class="phd" style="top:70px;height:18px"><div class="ut" style="left:2px;top:4.9px">Categories Bar</div></div>
<div class="pic" style="left:983px;top:73.8px;background:linear-gradient(#5A9AF8,#1F5FD8);border:1px solid #1E55C0"><div class="a" style="left:1.5px;top:1.5px;width:5px;height:5px;border:1.3px solid #fff;background:#2A66D8"></div></div>
<svg class="i" style="left:996.5px;top:73.8px" width="10" height="10" viewBox="0 0 10 10"><path d="M2 .8h6M3.2 .8L2.6 5.3M6.8 .8l.6 4.5M.8 5.6h8.4M5 5.6V10" stroke="#2158C0" stroke-width="1.3" fill="none"/></svg>
<div class="pic" style="left:1008.5px;top:73.8px;background:#E0552F"><svg class="i" style="left:2px;top:2px" width="6" height="6"><path d="M.5 .5l5 5M5.5 .5l-5 5" stroke="#fff" stroke-width="1.6"/></svg></div>
<div class="a" style="left:891.5px;top:89px;width:130.5px;height:305px;background:#fff;border:1px solid #A9BBD8"></div>
<div class="a" style="left:892.5px;top:90px;width:128.5px;height:14.5px;background:#EBE9DA;border-bottom:1px solid #D5D2C3"></div>
<div class="a" style="left:964.5px;top:91.5px;width:1px;height:11px;background:#CAC7B7;border-right:1px solid #fff"></div>
<div class="a" style="left:990px;top:91.5px;width:1px;height:11px;background:#CAC7B7;border-right:1px solid #fff"></div>
<div class="ut" style="left:968px;top:92.7px">Un...</div>
<div class="ut" style="left:996.5px;top:92.7px">Total</div>
<div class="a" style="left:899px;top:112px;width:1px;height:29.5px;border-left:1px dotted #C4C3BA"></div>
<div class="a" style="left:899px;top:112px;width:8px;height:1px;border-top:1px dotted #C4C3BA"></div>
<div class="a" style="left:899px;top:126.5px;width:8px;height:1px;border-top:1px dotted #C4C3BA"></div>
<div class="a" style="left:899px;top:141px;width:8px;height:1px;border-top:1px dotted #C4C3BA"></div>
<svg class="i" style="left:909px;top:107.5px" width="13" height="11" viewBox="0 0 13 11"><path d="M1 3c2-2 4-2 5.5 0 1.5-2 3.5-2 5.5 0v7c-2-1.5-4-1.5-5.5 0C5 8.5 3 8.5 1 10z" fill="#EAF2FB" stroke="#E28A3A" stroke-width="1.1"/><path d="M6.5 3v7" stroke="#8AA8CC" stroke-width=".8"/><path d="M3 4l2 3M8 4l2 3" stroke="#6F9AD8" stroke-width=".8"/></svg>
<div class="ut" style="left:925px;top:109.1px;letter-spacing:-0.1px">1. Resear</div>
<div class="ut" style="left:975px;top:109.1px;width:14.5px;text-align:right">9</div>
<div class="ut" style="left:1005px;top:109.1px;width:14.5px;text-align:right">9</div>
<svg class="i" style="left:909px;top:121.5px" width="14" height="12" viewBox="0 0 14 12"><circle cx="4" cy="4" r="3" fill="#E8953A"/><circle cx="10" cy="4" r="3" fill="#C8452A"/><path d="M0 12c0-4 2-5 4-5s4 1 4 5z" fill="#3C7CD8"/><path d="M6 12c0-4 2-5 4-5s4 1 4 5z" fill="#3CA848"/></svg>
<div class="ut" style="left:925px;top:123.1px;letter-spacing:-0.1px">2. Admissi</div>
<div class="ut" style="left:975px;top:123.1px;width:14.5px;text-align:right">11</div>
<div class="ut" style="left:1005px;top:123.1px;width:14.5px;text-align:right">11</div>
<div class="a" style="left:907px;top:134.8px;width:114.5px;height:14px;border:1px solid #333;background:#fff"></div>
<div class="a" style="left:966px;top:135.8px;width:54.5px;height:12px;background:#ECE9D8"></div>
<svg class="i" style="left:909px;top:134.5px" width="13" height="14" viewBox="0 0 13 14"><rect x="1" y="2" width="11" height="12" fill="#F1F3F6" stroke="#8A8F9A" stroke-width=".8"/><rect x="1" y="2" width="2.5" height="12" fill="#C84A30"/><path d="M5 0v4M8 0v4" stroke="#555" stroke-width=".8"/><text x="6" y="12" font-size="6" font-family="Liberation Sans" fill="#333">5</text></svg>
<div class="ut" style="left:925px;top:137.4px;letter-spacing:-0.1px">3. Study</div>
<div class="ut" style="left:975px;top:137.4px;width:14.5px;text-align:right">8</div>
<div class="ut" style="left:1005px;top:137.4px;width:14.5px;text-align:right">8</div>
<div class="phd" style="top:399px;height:16px"><div class="ut" style="left:2px;top:3.4px">Filters Bar</div></div>
<div class="pic" style="left:983px;top:401.5px;background:linear-gradient(#5A9AF8,#1F5FD8);border:1px solid #1E55C0"><div class="a" style="left:1.5px;top:1.5px;width:5px;height:5px;border:1.3px solid #fff;background:#2A66D8"></div></div>
<svg class="i" style="left:996.5px;top:401.5px" width="10" height="10" viewBox="0 0 10 10"><path d="M2 .8h6M3.2 .8L2.6 5.3M6.8 .8l.6 4.5M.8 5.6h8.4M5 5.6V10" stroke="#2158C0" stroke-width="1.3" fill="none"/></svg>
<div class="pic" style="left:1008.5px;top:401.5px;background:#E0552F"><svg class="i" style="left:2px;top:2px" width="6" height="6"><path d="M.5 .5l5 5M5.5 .5l-5 5" stroke="#fff" stroke-width="1.6"/></svg></div>
<div class="ut" style="left:898.8px;top:422.9px;font-weight:bold;letter-spacing:-0.1px;color:#10163A">Filter By Complete:</div>
<div class="cb" style="left:897.4px;top:436px;width:97px;height:16.5px"></div>
<div class="ut" style="left:900.5px;top:440.4px">All</div>
<div class="cbb" style="left:981px;top:437.5px;height:13.5px"><svg class="i" width="8" height="5" viewBox="0 0 8 5"><path d="M.8 .8L4 4l3.2-3.2" fill="none" stroke="#4D6185" stroke-width="1.5"/></svg></div>
<div class="ut" style="left:898.8px;top:460.9px;font-weight:bold;letter-spacing:-0.1px;color:#10163A">Filter By Due Date:</div>
<div class="a" style="left:910px;top:583px;width:38px;height:14.5px;border:1px solid #3C5A96;border-radius:3px;background:linear-gradient(#FFFFFF,#F0EFE8 80%,#DCD9CC)"></div>
<div class="ut" style="left:916px;top:586.2px">Today</div>
<div class="a" style="left:963px;top:583px;width:38px;height:14.5px;border:1px solid #3C5A96;border-radius:3px;background:linear-gradient(#FFFFFF,#F0EFE8 80%,#DCD9CC)"></div>
<div class="ut" style="left:972px;top:586.2px">Clear</div>
<div class="cb" style="left:897.4px;top:610px;width:117px;height:17px"></div>
<div class="ut" style="left:900.5px;top:614.5px">is less than or equal to</div>
<div class="cbb" style="left:1001px;top:611.5px;height:14px"><svg class="i" width="8" height="5" viewBox="0 0 8 5"><path d="M.8 .8L4 4l3.2-3.2" fill="none" stroke="#4D6185" stroke-width="1.5"/></svg></div>
<svg class="i" style="left:898.40px;top:482.20px" width="5" height="7" viewBox="0 0 5 7"><path d="M4.5 0v7L0 3.5z" fill="#0A0A20"/></svg>
<div class="ut" style="left:922.70px;top:481.01px">July</div>
<svg class="i" style="left:957.40px;top:482.20px" width="5" height="7" viewBox="0 0 5 7"><path d="M.5 0v7L5 3.5z" fill="#0A0A20"/></svg>
<svg class="i" style="left:970.40px;top:482.20px" width="5" height="7" viewBox="0 0 5 7"><path d="M4.5 0v7L0 3.5z" fill="#0A0A20"/></svg>
<div class="ut" style="left:981.00px;top:481.01px;letter-spacing:-0.1px">2006</div>
<svg class="i" style="left:1005.40px;top:482.20px" width="5" height="7" viewBox="0 0 5 7"><path d="M.5 0v7L5 3.5z" fill="#0A0A20"/></svg>
<div class="ut" style="left:906.20px;top:494.61px;width:14px;text-align:center">S</div>
<div class="ut" style="left:919.60px;top:494.61px;width:14px;text-align:center">M</div>
<div class="ut" style="left:934.60px;top:494.61px;width:14px;text-align:center">T</div>
<div class="ut" style="left:948.00px;top:494.61px;width:14px;text-align:center">W</div>
<div class="ut" style="left:963.90px;top:494.61px;width:14px;text-align:center">T</div>
<div class="ut" style="left:978.40px;top:494.61px;width:14px;text-align:center">F</div>
<div class="ut" style="left:992.60px;top:494.61px;width:14px;text-align:center">S</div>
<div class="a" style="left:904.40px;top:504.70px;width:100px;height:1px;background:#ACA899"></div>
<div class="calday gr" style="left:902.60px;top:508.21px">25</div>
<div class="calday gr" style="left:916.89px;top:508.21px">26</div>
<div class="calday gr" style="left:931.18px;top:508.21px">27</div>
<div class="calday gr" style="left:945.47px;top:508.21px">28</div>
<div class="calday gr" style="left:959.76px;top:508.21px">29</div>
<div class="calday gr" style="left:974.05px;top:508.21px">30</div>
<div class="calday" style="left:988.34px;top:508.21px">1</div>
<div class="calday" style="left:902.60px;top:520.31px">2</div>
<div class="calday" style="left:916.89px;top:520.31px">3</div>
<div class="calday" style="left:931.18px;top:520.31px">4</div>
<div class="calday" style="left:945.47px;top:520.31px">5</div>
<div class="calday" style="left:959.76px;top:520.31px">6</div>
<div class="calday" style="left:974.05px;top:520.31px">7</div>
<div class="calday" style="left:988.34px;top:520.31px">8</div>
<div class="calday" style="left:902.60px;top:532.41px">9</div>
<div class="calday" style="left:916.89px;top:532.41px">10</div>
<div class="calday" style="left:931.18px;top:532.41px">11</div>
<div class="calday" style="left:945.47px;top:532.41px">12</div>
<div class="calday" style="left:959.76px;top:532.41px">13</div>
<div class="calday" style="left:974.05px;top:532.41px">14</div>
<div class="calday" style="left:988.34px;top:532.41px">15</div>
<div class="calday" style="left:902.60px;top:544.51px">16</div>
<div class="calday" style="left:916.89px;top:544.51px">17</div>
<div class="calday" style="left:931.18px;top:544.51px">18</div>
<div class="calday" style="left:945.47px;top:544.51px">19</div>
<div class="calday" style="left:959.76px;top:544.51px">20</div>
<div class="calday" style="left:974.05px;top:544.51px">21</div>
<div class="calday" style="left:988.34px;top:544.51px">22</div>
<div class="calday" style="left:902.60px;top:556.61px">23</div>
<div class="calday" style="left:916.89px;top:556.61px">24</div>
<div class="calday" style="left:931.18px;top:556.61px">25</div>
<div class="calday" style="left:945.47px;top:556.61px">26</div>
<div class="a" style="left:961.80px;top:554.50px;width:14.3px;height:13px;background:#316AC5;border:1px solid #D8553A"></div>
<div class="calday" style="left:959.76px;top:556.61px;color:#fff">27</div>
<div class="calday" style="left:974.05px;top:556.61px">28</div>
<div class="calday" style="left:988.34px;top:556.61px">29</div>
<div class="calday" style="left:902.60px;top:568.71px">30</div>
<div class="calday" style="left:916.89px;top:568.71px">31</div>
<div class="calday gr" style="left:931.18px;top:568.71px">1</div>
<div class="calday gr" style="left:945.47px;top:568.71px">2</div>
<div class="calday gr" style="left:959.76px;top:568.71px">3</div>
<div class="calday gr" style="left:974.05px;top:568.71px">4</div>
<div class="calday gr" style="left:988.34px;top:568.71px">5</div>
<div class="a" style="left:904.40px;top:579.20px;width:100px;height:1px;background:#ACA899"></div><div class="a" style="left:895.5px;top:490.5px;width:119.5px;height:1px;background:#C4C0B0"></div><div class="a dlg" style="border:1px solid #0831A8;border-top-color:#2B6FF4"></div>
<div class="a" style="left:447px;top:188px;width:359px;height:22px;border-radius:6px 6px 0 0;background:linear-gradient(#3D8DFA 0,#2A78F6 1.5px,#0A5CEA 4px,#0859EA 15.5px,#2C74F2 17px,#2A72F0 20px,#0A3CCC 21px,#0A3CCC 22px)"></div>
<svg class="i" style="left:450px;top:193px" width="13" height="12" viewBox="0 0 13 12"><ellipse cx="6" cy="6" rx="5.8" ry="5.5" fill="#E9E3E8" stroke="#C27070" stroke-width=".7"/><path d="M5 5l4.5-2.5 3 3-2 4.5-4.5-1z" fill="#D8462A"/><circle cx="4" cy="5" r="1.7" fill="#8FA6D8"/></svg>
<div class="t" style="left:465.5px;top:196.2px;font-size:10.3px;font-weight:bold;color:#fff;letter-spacing:-0.05px">Edit Task</div>
<div class="a" style="left:786px;top:191.5px;width:16px;height:16px;border:1px solid #fff;border-radius:3px;background:linear-gradient(135deg,#F08A6A,#D9542E 50%,#C8421E)"><svg class="i" style="left:3px;top:3px" width="8" height="8"><path d="M.5 .5l7 7M7.5 .5l-7 7" stroke="#fff" stroke-width="2"/></svg></div>
<div class="a" style="left:449px;top:210px;width:354px;height:313px;background:#ECE9D8"></div>
<!-- tab page -->
<div class="a" style="left:454.8px;top:233px;width:340.5px;height:250.5px;border:1px solid #919B9C;background:linear-gradient(#FCFCFE,#F4F3EE)"></div>
<div class="tab" style="left:496.5px;top:218.5px;width:43px"></div>
<div class="tab" style="left:541px;top:218.5px;width:43px"></div>
<div class="tab" style="left:586.4px;top:218.5px;width:31.5px"></div>
<div class="tab" style="left:619.6px;top:218.5px;width:31.2px"></div>
<div class="a" style="left:454.8px;top:217px;width:41.5px;height:17px;border:1px solid #919B9C;border-bottom:none;border-radius:3px 3px 0 0;background:#FCFCFE"></div>
<div class="a" style="left:455px;top:217px;width:41px;height:2.2px;background:#E6A03A;border-radius:3px 3px 0 0"></div>
<div class="ut" style="left:460.9px;top:220.5px">General</div>
<div class="ut" style="left:500.6px;top:222.2px;letter-spacing:-0.602px">Reminder</div>
<div class="ut" style="left:545.8px;top:222.2px;letter-spacing:-0.440px">Hyperlink</div>
<div class="ut" style="left:592.5px;top:222.2px">Note</div>
<div class="ut" style="left:628.7px;top:222.2px">Info</div>
<div class="ut" style="left:468.6px;top:243.1px">Task:</div>
<div class="ed" style="left:498.4px;top:239.6px;width:266.6px;height:17px;border-radius:2px"></div>
<div class="ut" style="left:501px;top:242.8px;letter-spacing:-0.396px">Plan your Transportation.</div>
<div class="ut" style="left:468.4px;top:269.1px;letter-spacing:-0.535px">Priority:</div>
<div class="ed" style="left:498.4px;top:265.4px;width:87.2px;height:16.5px;border-radius:2px"></div>
<svg class="i" style="left:501.3px;top:266.9px" width="13" height="13" viewBox="0 0 13 13"><defs><radialGradient id="gpr" cx=".45" cy=".4" r=".6"><stop offset="0" stop-color="#FFD9A8"/><stop offset=".5" stop-color="#F08A3A"/><stop offset="1" stop-color="#C8401A"/></radialGradient></defs><circle cx="6.5" cy="6.5" r="6.2" fill="url(#gpr)"/><circle cx="6.5" cy="6.5" r="2.6" fill="#FFFFFF"/></svg>
<div class="ut" style="left:517.7px;top:269.3px">Normal</div>
<div class="cbb" style="left:572.4px;top:267px;height:13.5px"><svg class="i" width="8" height="5" viewBox="0 0 8 5"><path d="M.8 .8L4 4l3.2-3.2" fill="none" stroke="#4D6185" stroke-width="1.5"/></svg></div>
<div class="ut" style="left:596.6px;top:269.3px;letter-spacing:-0.602px">Category:</div>
<div class="ed" style="left:639.3px;top:265.5px;width:125.7px;height:16.5px;border-radius:2px"></div>
<div class="ut" style="left:642px;top:269.3px">2. Admission</div>
<div class="cbb" style="left:751.5px;top:267px;height:13.5px"><svg class="i" width="8" height="5" viewBox="0 0 8 5"><path d="M.8 .8L4 4l3.2-3.2" fill="none" stroke="#4D6185" stroke-width="1.5"/></svg></div>
<div class="ut" style="left:468.4px;top:288.9px">Note:</div>
<div class="ed" style="left:468.9px;top:301.2px;width:295.6px;height:51.2px"></div>
<div class="ut" style="left:471.4px;top:304.6px;letter-spacing:-0.348px">Review public transportation options. Do you really need a car?</div>
<div class="ut" style="left:468.4px;top:368.4px">Status:</div>
<div class="ed" style="left:497.7px;top:365.4px;width:96.5px;height:16.5px;border-radius:2px"></div>
<svg class="i" style="left:502px;top:367.3px" width="11" height="12.5" viewBox="0 0 11 12.5"><path d="M.5 .5h7l3 3v8.5H.5z" fill="url(#gfo)" stroke="#8FA6CC" stroke-width=".8"/><path d="M7.5 .5v3h3" fill="#9BB8E8"/></svg>
<div class="ut" style="left:517.2px;top:368.6px">Created</div>
<div class="cbb" style="left:581px;top:367px;height:13.5px"><svg class="i" width="8" height="5" viewBox="0 0 8 5"><path d="M.8 .8L4 4l3.2-3.2" fill="none" stroke="#4D6185" stroke-width="1.5"/></svg></div>
<div class="ut" style="left:610.8px;top:369.4px;letter-spacing:-0.721px">Complete(%):</div>
<div class="ed" style="left:664.1px;top:365.2px;width:70.6px;height:17px;border-radius:2px"></div>
<div class="ut" style="left:667px;top:369.4px">0</div>
<div class="cbb" style="left:699.6px;top:367px;width:10px;height:13.5px"><svg class="i" style="left:2.5px" width="4" height="6" viewBox="0 0 4 6"><path d="M3.3 .5L.8 3l2.5 2.5" fill="none" stroke="#4D6185" stroke-width="1.2"/></svg></div>
<div class="cbb" style="left:711px;top:367px;width:11px;height:6.7px"><svg class="i" style="left:2px;top:1px;margin:0" width="6" height="4" viewBox="0 0 6 4"><path d="M.5 3.3L3 .8l2.5 2.5" fill="none" stroke="#4D6185" stroke-width="1.2"/></svg></div>
<div class="cbb" style="left:711px;top:373.8px;width:11px;height:6.7px"><svg class="i" style="left:2px;top:1.5px;margin:0" width="6" height="4" viewBox="0 0 6 4"><path d="M.5 .7L3 3.2l2.5-2.5" fill="none" stroke="#4D6185" stroke-width="1.2"/></svg></div>
<div class="cbb" style="left:723px;top:367px;width:10.5px;height:13.5px"><svg class="i" style="left:3px" width="4" height="6" viewBox="0 0 4 6"><path d="M.7 .5L3.2 3 .7 5.5" fill="none" stroke="#4D6185" stroke-width="1.2"/></svg></div>
<div class="btn" style="left:738.3px;top:365.2px;width:18.4px;height:18.5px;border-color:#3C5A96"></div>
<svg class="i" style="left:741.5px;top:368.5px" width="12" height="12" viewBox="0 0 12 12"><circle cx="6" cy="6" r="5" fill="#F7D7A0" stroke="#E2781E" stroke-width="1.4"/><circle cx="6" cy="6" r="2.5" fill="none" stroke="#D8552A" stroke-width="1.2"/><path d="M4 6.5l1.6 1.6L8.5 4" fill="none" stroke="#C8421E" stroke-width="1"/></svg>
<div class="ut" style="left:468.4px;top:395.5px;letter-spacing:-0.566px">Estimated time:</div>
<div class="ed" style="left:526.4px;top:393.5px;width:67.8px;height:16.2px;border-radius:2px"></div>
<div class="ut" style="left:529px;top:396.7px">0 minutes</div>
<div class="cbb" style="left:581px;top:395px;height:13px"><svg class="i" width="8" height="5" viewBox="0 0 8 5"><path d="M.8 .8L4 4l3.2-3.2" fill="none" stroke="#4D6185" stroke-width="1.5"/></svg></div>
<div class="ut" style="left:615.2px;top:395.7px">Actual time:</div>
<div class="ed" style="left:663.2px;top:392.8px;width:67.5px;height:16.7px;border-radius:2px"></div>
<div class="ut" style="left:666px;top:396.4px">0 minutes</div>
<div class="cbb" style="left:717.8px;top:394.5px;height:13.5px"><svg class="i" width="8" height="5" viewBox="0 0 8 5"><path d="M.8 .8L4 4l3.2-3.2" fill="none" stroke="#4D6185" stroke-width="1.5"/></svg></div>
<div class="a" style="left:468px;top:417.5px;width:10.5px;height:10.5px;border:1px solid #1C5180;background:linear-gradient(135deg,#DCDCD7,#FFFFFF)"></div>
<svg class="i" style="left:469.5px;top:419.5px" width="8" height="7" viewBox="0 0 8 7"><path d="M.8 3.2l2.2 2.3L7.2 1" fill="none" stroke="#21A121" stroke-width="1.8"/></svg>
<div class="ut" style="left:481px;top:418.4px;letter-spacing:-0.368px">Due date</div>
<div class="a" style="left:521.3px;top:425.8px;width:243px;height:1px;background:#D0D0BF"></div>
<svg class="i" style="left:485px;top:439px" width="11" height="11" viewBox="0 0 11 11"><circle cx="5.5" cy="5.5" r="4.8" fill="#F4F4F0" stroke="#1C5180" stroke-width=".9"/><circle cx="5.5" cy="5.5" r="2" fill="#2FA12F"/></svg>
<div class="ut" style="left:498.8px;top:439.9px">Once</div>
<svg class="i" style="left:485px;top:462px" width="11" height="11" viewBox="0 0 11 11"><circle cx="5.5" cy="5.5" r="4.8" fill="#F4F4F0" stroke="#1C5180" stroke-width=".9"/></svg>
<div class="ut" style="left:498.8px;top:462.5px;letter-spacing:-0.367px">Recurrence</div>
<div class="ed" style="left:555.5px;top:436.3px;width:96px;height:16.4px;border-radius:2px"></div>
<div class="ut" style="left:558.3px;top:439.9px">7/27/2006</div>
<div class="cbb" style="left:638.5px;top:438px;height:13px"><svg class="i" width="8" height="5" viewBox="0 0 8 5"><path d="M.8 .8L4 4l3.2-3.2" fill="none" stroke="#4D6185" stroke-width="1.5"/></svg></div>
<div class="ed" style="left:657.9px;top:436.2px;width:80.9px;height:16.4px;border-radius:2px"></div>
<div class="ut" style="left:661px;top:439.2px;letter-spacing:-0.350px">18:05:38</div>
<div class="cbb" style="left:725.8px;top:438px;width:11px;height:6.5px"><svg class="i" style="left:2px;top:1px;margin:0" width="6" height="4" viewBox="0 0 6 4"><path d="M.5 3.3L3 .8l2.5 2.5" fill="none" stroke="#4D6185" stroke-width="1.2"/></svg></div>
<div class="cbb" style="left:725.8px;top:444.8px;width:11px;height:6.5px"><svg class="i" style="left:2px;top:1.5px;margin:0" width="6" height="4" viewBox="0 0 6 4"><path d="M.5 .7L3 3.2l2.5-2.5" fill="none" stroke="#4D6185" stroke-width="1.2"/></svg></div>
<div class="a" style="left:600px;top:458.7px;width:138.8px;height:19.2px;border:1px solid #A9BDD8;border-radius:2px;background:repeating-linear-gradient(45deg,#ECEAE0 0 1px,#F6F5F0 1px 2px)"></div>
<div class="a" style="left:708.6px;top:460px;width:11px;height:16.5px;border:1px solid #DAD8CC;border-radius:2px;background:#F5F4EE"></div>
<div class="ut" style="left:710.5px;top:463px;color:#B8B6AA">...</div>
<div class="a" style="left:722.5px;top:460px;width:14.5px;height:16.5px;border:1px solid #DAD8CC;border-radius:2px;background:#F1F0EA"></div>
<svg class="i" style="left:724px;top:462px" width="12" height="12" viewBox="0 0 12 12"><path d="M6 .5L11.5 6 6 11.5.5 6z" fill="#A9A697" stroke="#CFCDC0" stroke-width=".8"/></svg>
<div class="ut" style="left:454.2px;top:497.7px">Hint: Use shortcut Ctrl+Tab to switch between</div>
<div class="ut" style="left:454.2px;top:507.9px">pages</div>
<div class="btn" style="left:668px;top:497.7px;width:52.4px;height:17.8px"></div>
<svg class="i" style="left:678px;top:502.5px" width="13" height="9" viewBox="0 0 13 9"><path d="M1 4.5l3.5 3.5L12 1" fill="none" stroke="#21A121" stroke-width="2.4"/></svg>
<div class="ut" style="left:693.7px;top:501.4px">Ok</div>
<div class="btn" style="left:736.1px;top:497.7px;width:58.1px;height:17.8px"></div>
<svg class="i" style="left:745px;top:502px" width="11" height="10" viewBox="0 0 11 10"><path d="M1 1l9 8M10 1L1 9" stroke="#E0502A" stroke-width="2.4"/></svg>
<div class="ut" style="left:760.7px;top:501.4px;letter-spacing:-0.491px">Cancel</div>
<!-- calendar popup -->
<div class="a" style="left:555.5px;top:453px;width:121px;height:127.5px;border:1px solid #1A1A1A;background:#fff"></div>
<div class="a" style="left:556.5px;top:454px;width:119px;height:13.7px;background:#ECE9D8"></div>
<div class="btn" style="left:597.4px;top:559.5px;width:37.6px;height:15px;border-color:#3C5A96"></div>
<div class="ut" style="left:603.5px;top:563px">Today</div>
<svg class="i" style="left:560.00px;top:458.00px" width="5" height="7" viewBox="0 0 5 7"><path d="M4.5 0v7L0 3.5z" fill="#0A0A20"/></svg>
<div class="ut" style="left:584.30px;top:456.81px">July</div>
<svg class="i" style="left:619.00px;top:458.00px" width="5" height="7" viewBox="0 0 5 7"><path d="M.5 0v7L5 3.5z" fill="#0A0A20"/></svg>
<svg class="i" style="left:632.00px;top:458.00px" width="5" height="7" viewBox="0 0 5 7"><path d="M4.5 0v7L0 3.5z" fill="#0A0A20"/></svg>
<div class="ut" style="left:642.60px;top:456.81px;letter-spacing:-0.1px">2006</div>
<svg class="i" style="left:667.00px;top:458.00px" width="5" height="7" viewBox="0 0 5 7"><path d="M.5 0v7L5 3.5z" fill="#0A0A20"/></svg>
<div class="ut" style="left:567.80px;top:470.41px;width:14px;text-align:center">S</div>
<div class="ut" style="left:581.20px;top:470.41px;width:14px;text-align:center">M</div>
<div class="ut" style="left:596.20px;top:470.41px;width:14px;text-align:center">T</div>
<div class="ut" style="left:609.60px;top:470.41px;width:14px;text-align:center">W</div>
<div class="ut" style="left:625.50px;top:470.41px;width:14px;text-align:center">T</div>
<div class="ut" style="left:640.00px;top:470.41px;width:14px;text-align:center">F</div>
<div class="ut" style="left:654.20px;top:470.41px;width:14px;text-align:center">S</div>
<div class="a" style="left:566.00px;top:480.50px;width:100px;height:1px;background:#ACA899"></div>
<div class="calday gr" style="left:564.20px;top:484.01px">25</div>
<div class="calday gr" style="left:578.49px;top:484.01px">26</div>
<div class="calday gr" style="left:592.78px;top:484.01px">27</div>
<div class="calday gr" style="left:607.07px;top:484.01px">28</div>
<div class="calday gr" style="left:621.36px;top:484.01px">29</div>
<div class="calday gr" style="left:635.65px;top:484.01px">30</div>
<div class="calday" style="left:649.94px;top:484.01px">1</div>
<div class="calday" style="left:564.20px;top:496.11px">2</div>
<div class="calday" style="left:578.49px;top:496.11px">3</div>
<div class="calday" style="left:592.78px;top:496.11px">4</div>
<div class="calday" style="left:607.07px;top:496.11px">5</div>
<div class="calday" style="left:621.36px;top:496.11px">6</div>
<div class="calday" style="left:635.65px;top:496.11px">7</div>
<div class="calday" style="left:649.94px;top:496.11px">8</div>
<div class="calday" style="left:564.20px;top:508.21px">9</div>
<div class="calday" style="left:578.49px;top:508.21px">10</div>
<div class="calday" style="left:592.78px;top:508.21px">11</div>
<div class="calday" style="left:607.07px;top:508.21px">12</div>
<div class="calday" style="left:621.36px;top:508.21px">13</div>
<div class="calday" style="left:635.65px;top:508.21px">14</div>
<div class="calday" style="left:649.94px;top:508.21px">15</div>
<div class="calday" style="left:564.20px;top:520.31px">16</div>
<div class="calday" style="left:578.49px;top:520.31px">17</div>
<div class="calday" style="left:592.78px;top:520.31px">18</div>
<div class="calday" style="left:607.07px;top:520.31px">19</div>
<div class="calday" style="left:621.36px;top:520.31px">20</div>
<div class="calday" style="left:635.65px;top:520.31px">21</div>
<div class="calday" style="left:649.94px;top:520.31px">22</div>
<div class="calday" style="left:564.20px;top:532.41px">23</div>
<div class="calday" style="left:578.49px;top:532.41px">24</div>
<div class="calday" style="left:592.78px;top:532.41px">25</div>
<div class="calday" style="left:607.07px;top:532.41px">26</div>
<div class="a" style="left:623.40px;top:530.30px;width:14.3px;height:13px;background:#316AC5;border:1px solid #D8553A"></div>
<div class="calday" style="left:621.36px;top:532.41px;color:#fff">27</div>
<div class="calday" style="left:635.65px;top:532.41px">28</div>
<div class="calday" style="left:649.94px;top:532.41px">29</div>
<div class="calday" style="left:564.20px;top:544.51px">30</div>
<div class="calday" style="left:578.49px;top:544.51px">31</div>
<div class="calday gr" style="left:592.78px;top:544.51px">1</div>
<div class="calday gr" style="left:607.07px;top:544.51px">2</div>
<div class="calday gr" style="left:621.36px;top:544.51px">3</div>
<div class="calday gr" style="left:635.65px;top:544.51px">4</div>
<div class="calday gr" style="left:649.94px;top:544.51px">5</div>
<div class="a" style="left:566.00px;top:555.00px;width:100px;height:1px;background:#ACA899"></div><div class="a" style="left:0;top:784.5px;width:1024px;height:1px;background:#C9C6B8"></div>
<div class="a" style="left:0;top:785.5px;width:1024px;height:14.5px;background:linear-gradient(#F2F0E6,#ECE9D8)"></div>

</body></html>
